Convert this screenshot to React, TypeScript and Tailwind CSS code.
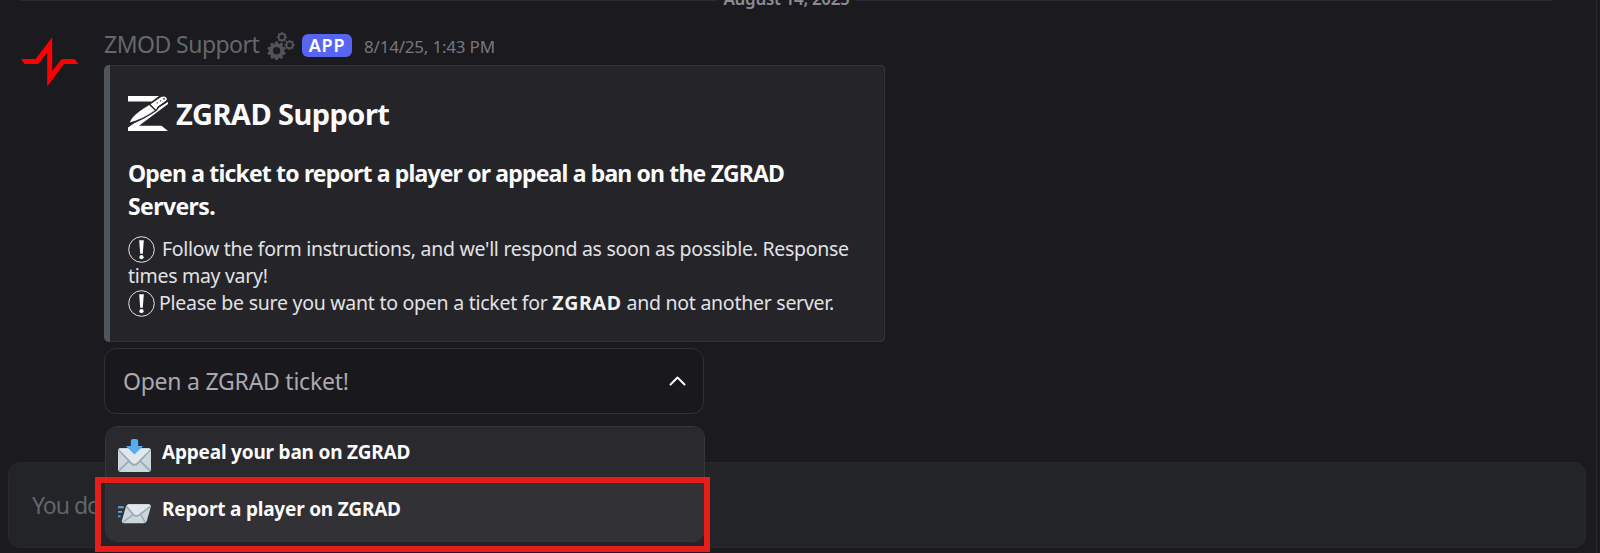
import type { ReactNode } from "react";

function PulseLogo() {
  return (
    <svg className="block h-[50px] w-[58px]" viewBox="0 0 58 50" fill="#ff0000">
      <path d="M0 22h14.6L31.2 0.2v33.8L40.8 22H53.6l4 5.1H43L26.2 49.6V15.8L17.2 27.1H3.6z" />
    </svg>
  );
}

function Gear({ cx, cy, r, hole, teeth, tooth }: { cx: number; cy: number; r: number; hole: number; teeth: number; tooth: number }) {
  return (
    <g>
      {Array.from({ length: teeth }, (_, i) => (
        <rect
          key={i}
          x={cx - tooth / 2}
          y={cy - r * 1.22}
          width={tooth}
          height={r * 0.5}
          rx={0.6}
          fill="#53545a"
          transform={`rotate(${(360 / teeth) * i} ${cx} ${cy})`}
        />
      ))}
      <circle cx={cx} cy={cy} r={(r + hole) / 2} fill="none" stroke="#53545a" strokeWidth={r - hole} />
    </g>
  );
}

function GearsIcon() {
  return (
    <svg className="block h-7 w-7" viewBox="0 0 28 28">
      <Gear cx={9.6} cy={18.8} r={7.6} hole={3.7} teeth={10} tooth={3} />
      <Gear cx={14.9} cy={5.1} r={4.2} hole={2.3} teeth={8} tooth={1.9} />
      <Gear cx={22.6} cy={12.9} r={4.2} hole={2.3} teeth={8} tooth={1.9} />
    </svg>
  );
}

function KnifeLogo() {
  return (
    <svg className="block h-[35px] w-10" viewBox="0 0 40 35" fill="#fff">
      <path d="M0 0h31L24 5.4H0z" />
      <path d="M40 5.800V8L11 29.800H33.500L40 35H0v-3.600L13 22.500z" />
      <path d="M1.800 26.600C3.800 20.500 11 15.500 22 8.600L27.400 13.600C19 19.800 10 24.500 1.800 26.600z" />
      <path d="M22.500 8.200L33 1C36-.500 39.800.900 38.600 4.300L29.800 10.800 27.800 14.400z" />
      <path d="M21.200 8.300l6.400 5.900M1.800 28C11.500 25 20 20 28.400 14.200l1.900-2.900L40 4.600" fill="none" stroke="#252429" strokeWidth="1.300" />
      <path d="M20.500 8.500L32.500.2" fill="none" stroke="#252429" strokeWidth="1" />
      <circle cx="36" cy="2.900" r=".8" fill="#252429" />
      <circle cx="29.200" cy="6.900" r=".6" fill="#252429" />
      <circle cx="32.600" cy="4.800" r=".6" fill="#252429" />
    </svg>
  );
}

function AlertIcon() {
  return (
    <svg className="mt-px block h-[27px] w-[27px] shrink-0" viewBox="0 0 27 27">
      <circle cx="13.500" cy="13.500" r="12.800" fill="none" stroke="#e4e4e6" strokeWidth="1" />
      <path d="M11.200 4.200h4.600l-1 13.600h-2.600z" fill="#fff" />
      <circle cx="13.500" cy="21.200" r="2.100" fill="#fff" />
    </svg>
  );
}

function InboxEnvelope() {
  return (
    <svg className="block h-[33px] w-[33px] shrink-0" viewBox="0 0 36 36">
      <rect y="10" width="36" height="26" rx="3" fill="#ccd6dd" />
      <path d="M1 34.500L13 23M35 34.500L23 23" stroke="#99aab5" strokeWidth="1.800" />
      <path d="M.8 11.500L14.500 26.500q3.500 3.500 7 0L35.200 11.500" fill="none" stroke="#99aab5" strokeWidth="2" />
      <path d="M3 10h30q2 0 2.500 1L21 25q-3 2.800-6 0L.5 11Q1 10 3 10z" fill="#e1e8ed" />
      <path d="M14 2.500Q14 0 16.500 0h3Q22 0 22 2.500V7.500h5.500L18 17 8.500 7.500H14z" fill="#55acee" />
    </svg>
  );
}

function FlyingEnvelope() {
  return (
    <svg className="mt-px block h-[33px] w-[33px] shrink-0" viewBox="0 0 36 36">
      <path d="M12 8h21q3.500 0 2.700 3L31.500 26Q31 28.500 28 28.500H6.500Q3.500 28.500 4.300 25.500L8.500 11Q9.300 8 12 8z" fill="#ccd6dd" />
      <path d="M5.500 27.500L16 19.500M29.500 27.500L25 19.500" stroke="#99aab5" strokeWidth="1.600" />
      <path d="M9.300 10.500l7.500 9q2.800 2.600 6.500 0L35 10.500" fill="none" stroke="#99aab5" strokeWidth="1.800" />
      <path d="M12 8h21q1.800 0 2.400 1L23 18.300q-3 2-5.200 0L9.600 9.200Q10.500 8 12 8z" fill="#e1e8ed" />
      <path d="M0 11.200h6.300M0 16.200h4.500M0 21.200h2.800" stroke="#55acee" strokeWidth="2" />
    </svg>
  );
}

function Option({ icon, children, active }: { icon: ReactNode; children: ReactNode; active?: boolean }) {
  return (
    <div className={active ? "flex h-[57px] gap-[11px] bg-[#323136] pl-3 pt-3" : "flex h-[57px] gap-[11px] bg-[#2a292e] pl-3 pt-3"}>
      {icon}
      <span className="text-[19px] font-bold leading-[26px] tracking-[-0.2px] text-[#fbfbfb]">{children}</span>
    </div>
  );
}

export default function App() {
  return (
    <div className="relative flex h-[553px] w-[1600px] overflow-hidden whitespace-nowrap bg-[#1b1a1f] font-['Noto_Sans',sans-serif]">
      <main className="flex w-[1597px] flex-col border-r border-[#29282c]">
        <div className="flex h-7 items-start pl-5">
          <div className="h-px w-[697px] bg-[#2c2b30]" />
          <span className="-mt-[13px] w-[139px] text-center text-[17px] font-semibold leading-6 tracking-[-0.33px] text-[#8b8b92]">
            August 14, 2025
          </span>
          <div className="h-px w-[697px] bg-[#2c2b30]" />
        </div>

        <article className="flex h-[434px]">
          <div className="w-[104px] pl-[21px] pt-[9px]">
            <PulseLogo />
          </div>
          <div className="flex flex-col">
            <header className="flex h-[37px] items-start">
              <span className="w-[163px] text-[23px] leading-8 tracking-[-0.53px] text-[#66676d]">ZMOD Support</span>
              <div className="mt-1 w-[35px]">
                <GearsIcon />
              </div>
              <span className="mt-[6px] flex h-[23px] w-[50px] items-center justify-center rounded-[6px] bg-[#5865f2] text-[18px] font-semibold leading-[23px] tracking-[0.7px] text-white">
                APP
              </span>
              <time className="ml-3 mt-[3px] text-[17px] leading-8 tracking-[-0.2px] text-[#77777e]">8/14/25, 1:43 PM</time>
            </header>

            <section className="flex h-[277px] w-[781px] overflow-hidden rounded-[5px] bg-[#50545c]">
              <div className="ml-[6px] flex flex-1 flex-col rounded-r-[5px] border-y border-r border-[#333238] bg-[#252429] pl-[18px] pt-[26px]">
                <div className="flex h-[65px] gap-2">
                  <div className="pt-1">
                    <KnifeLogo />
                  </div>
                  <h1 className="pt-px text-[29px] font-bold leading-[42px] tracking-[-0.55px] text-[#fbfbfb]">ZGRAD Support</h1>
                </div>
                <h2 className="text-[23px] font-bold leading-[33px] tracking-[-0.84px] text-[#fbfbfb]">
                  Open a ticket to report a player or appeal a ban on the ZGRAD
                  <br />
                  <span className="tracking-[-0.6px]">Servers.</span>
                </h2>
                <div className="mt-3 flex flex-col text-[19.5px] leading-[27px] tracking-[-0.29px] text-[#e2e2e5]">
                  <div className="flex h-[27px] gap-[7px]">
                    <AlertIcon />
                    <span>Follow the form instructions, and we'll respond as soon as possible. Response</span>
                  </div>
                  <span>times may vary!</span>
                  <div className="flex h-[27px] gap-1">
                    <AlertIcon />
                    <span className="tracking-[-0.26px]">
                      Please be sure you want to open a ticket for{" "}
                      <strong className="font-bold tracking-[0.7px] text-[#f2f2f3]">ZGRAD</strong> and not another server.
                    </span>
                  </div>
                </div>
              </div>
            </section>

            <div className="mt-[6px] flex h-[66px] w-[600px] items-center justify-between rounded-xl border border-[#323136] bg-[#19181d] pl-[18px] pr-[17px]">
              <span className="-mt-px text-[23px] leading-8 tracking-[-0.25px] text-[#a9a9af]">Open a ZGRAD ticket!</span>
              <svg className="block h-3 w-[17px]" viewBox="0 0 17 12" fill="none" stroke="#fbfbfb" strokeWidth="2" strokeLinecap="round" strokeLinejoin="round">
                <path d="M1.500 9.500l7-7 7 7" />
              </svg>
            </div>
          </div>
        </article>

        <footer className="ml-2 flex h-[86px] w-[1578px] items-center rounded-xl border border-[#29292d] bg-[#222427] pl-[23px]">
          <span className="-mt-px text-[23px] leading-8 tracking-[-1px] text-[#63656b]">You do</span>
        </footer>
      </main>

      <div className="absolute left-[105px] top-[426px] flex h-[116px] w-[600px] flex-col overflow-hidden rounded-xl border border-[#37363b]">
        <Option icon={<InboxEnvelope />}>Appeal your ban on ZGRAD</Option>
        <Option icon={<FlyingEnvelope />} active>
          Report a player on ZGRAD
        </Option>
      </div>
      <div className="absolute left-[95px] top-[477px] h-[75px] w-[615px] border-[6px] border-[#e71d1c]" />
    </div>
  );
}
